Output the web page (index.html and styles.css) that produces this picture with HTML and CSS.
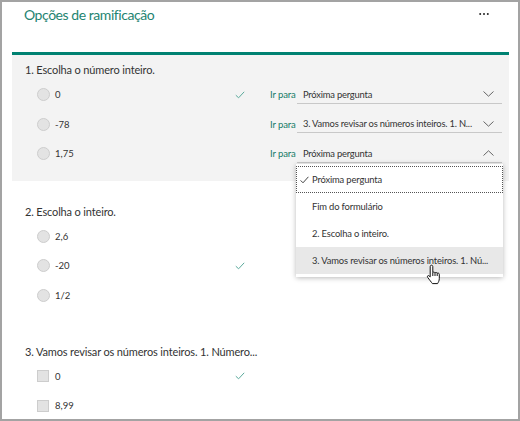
FILE: index.html
```html
<!DOCTYPE html>
<html lang="pt">
<head>
<meta charset="utf-8">
<link rel="stylesheet" href="styles.css">
</head>
<body>
<div class="frame">
  <header class="head">
    <h1 class="title">Opções de ramificação</h1>
    <svg class="more" width="10" height="4" viewBox="0 0 10 4"><circle cx="1.2" cy="2" r="1" fill="#222"/><circle cx="5" cy="2" r="1" fill="#222"/><circle cx="8.8" cy="2" r="1" fill="#222"/></svg>
  </header>
  <div class="card">
    <section class="q q1">
      <div class="qtitle">1. Escolha o número inteiro.</div>
      <div class="row">
        <span class="radio"></span><span class="lbl">0</span>
        <span class="chk"><svg width="10" height="8" viewBox="0 0 10 8"><path d="M0.8 4.2 L3.6 6.8 L9.2 0.8" fill="none" stroke="#5aa99b" stroke-width="1"/></svg></span>
        <span class="go">Ir para</span>
        <span class="sel"><span class="seltxt">Próxima pergunta</span><svg class="chev" width="11" height="6" viewBox="0 0 11 6"><path d="M0.5 0.5 L5.5 5.2 L10.5 0.5" fill="none" stroke="#666" stroke-width="1"/></svg></span>
      </div>
      <div class="row">
        <span class="radio"></span><span class="lbl">-78</span>
        <span class="chk"></span>
        <span class="go">Ir para</span>
        <span class="sel"><span class="seltxt">3. Vamos revisar os números inteiros. 1. N...</span><svg class="chev" width="11" height="6" viewBox="0 0 11 6"><path d="M0.5 0.5 L5.5 5.2 L10.5 0.5" fill="none" stroke="#666" stroke-width="1"/></svg></span>
      </div>
      <div class="row">
        <span class="radio"></span><span class="lbl">1,75</span>
        <span class="chk"></span>
        <span class="go">Ir para</span>
        <span class="sel open"><span class="seltxt">Próxima pergunta</span><svg class="chev" width="11" height="6" viewBox="0 0 11 6"><path d="M0.5 5.5 L5.5 0.8 L10.5 5.5" fill="none" stroke="#666" stroke-width="1"/></svg></span>
      </div>
    </section>
    <section class="q q2">
      <div class="qtitle">2. Escolha o inteiro.</div>
      <div class="row">
        <span class="radio"></span><span class="lbl">2,6</span>
      </div>
      <div class="row">
        <span class="radio"></span><span class="lbl">-20</span>
        <span class="chk"><svg width="10" height="8" viewBox="0 0 10 8"><path d="M0.8 4.2 L3.6 6.8 L9.2 0.8" fill="none" stroke="#5aa99b" stroke-width="1"/></svg></span>
      </div>
      <div class="row">
        <span class="radio"></span><span class="lbl">1/2</span>
      </div>
    </section>
    <section class="q q3">
      <div class="qtitle">3. Vamos revisar os números inteiros. 1. Número...</div>
      <div class="row">
        <span class="box"></span><span class="lbl">0</span>
        <span class="chk"><svg width="10" height="8" viewBox="0 0 10 8"><path d="M0.8 4.2 L3.6 6.8 L9.2 0.8" fill="none" stroke="#5aa99b" stroke-width="1"/></svg></span>
      </div>
      <div class="row">
        <span class="box"></span><span class="lbl">8,99</span>
      </div>
    </section>
  </div>
  <ul class="menu">
    <li class="item focus"><svg class="tick" width="9" height="8" viewBox="0 0 9 8"><path d="M0.6 4.4 L3 6.8 L8.4 0.8" fill="none" stroke="#444" stroke-width="1"/></svg>Próxima pergunta</li>
    <li class="item">Fim do formulário</li>
    <li class="item">2. Escolha o inteiro.</li>
    <li class="item hover">3. Vamos revisar os números inteiros. 1. Nú...</li>
  </ul>
  <svg class="hand" width="16" height="21" viewBox="0 0 16 21"><path d="M5.5 1.2 C6.3 1.2 6.8 1.8 6.8 2.6 L6.8 8.6 C7.2 7.9 8.6 7.9 9 8.9 C9.5 8.2 10.9 8.3 11.2 9.3 C11.7 8.8 13.2 9 13.3 10.2 L13.3 14.5 C13.3 16.8 12.3 18.3 11.6 19.6 L6.4 19.6 C5.4 18.3 3.3 15.6 1.7 13.4 C1 12.4 1.6 11.2 2.8 11.6 L4.2 12.9 L4.2 2.6 C4.2 1.8 4.7 1.2 5.5 1.2 Z M6.8 8.6 L6.8 12 M9 8.9 L9 12 M11.2 9.3 L11.2 12" fill="#fff" stroke="#111" stroke-width="1" stroke-linejoin="round"/></svg>
</div>
</body>
</html>
```

FILE: styles.css
```css
* { box-sizing: border-box; }
html, body { margin: 0; padding: 0; background: #fff; }
body { font-family: Lato, "Open Sans", sans-serif; color: #333; }
.frame {
  position: relative;
  width: 520px;
  height: 421px;
  border: 2px solid #a3a3a3;
  overflow: hidden;
}
.head {
  height: 50px;
  display: flex;
  justify-content: space-between;
  align-items: flex-start;
  padding: 0 29px 0 22px;
}
.title {
  margin: 0;
  font-weight: 400;
  font-size: 14px;
  letter-spacing: -0.45px;
  line-height: 20px;
  padding-top: 3px;
  color: #1e8471;
}
.more { margin-top: 10px; }
.card {
  margin: 0 9px 0 10px;
  border-top: 3px solid #008272;
}
.q { padding-left: 25px; padding-right: 5px; }
.q1 { background: #f3f3f3; padding-top: 7px; padding-bottom: 12px; }
.q2 { padding-top: 23px; padding-bottom: 10px; }
.q3 { padding-top: 23.5px; }
.qtitle {
  margin-left: -12px;
  font-size: 11px;
  letter-spacing: -0.15px;
  line-height: 16px;
  margin-bottom: 2px;
  color: #333;
  white-space: nowrap;
}
.row {
  height: 29.5px;
  display: grid;
  grid-template-columns: 18px 179px 36px 27px 205px;
  align-items: center;
}
.radio {
  width: 13px; height: 13px;
  border-radius: 50%;
  background: #e3e3e3;
  border: 1px solid #cdcdcd;
}
.box {
  width: 12px; height: 12px;
  background: #e3e3e3;
  border: 1px solid #cdcdcd;
}
.lbl { font-size: 9.5px; color: #333; }
.chk { display: flex; align-items: center; padding-left: 1px; }
.go { font-size: 9.5px; color: #147a67; white-space: nowrap; letter-spacing: -0.1px; }
.sel {
  height: 17px;
  margin-top: 1px;
  border-bottom: 1px solid #c8c8c8;
  display: flex;
  align-items: center;
  justify-content: space-between;
  padding: 0 8px 1px 6px;
  font-size: 9.4px;
  letter-spacing: -0.2px;
  color: #333;
}
.seltxt { white-space: nowrap; }
.chev { flex: none; }
.menu {
  position: absolute;
  left: 294px;
  top: 162px;
  width: 207px;
  margin: 0;
  padding: 2px 0 3px;
  list-style: none;
  background: #fff;
  box-shadow: 0 1px 5px rgba(0,0,0,0.28);
}
.item {
  height: 27px;
  display: flex;
  align-items: center;
  padding-left: 16px;
  font-size: 9.4px;
  letter-spacing: -0.15px;
  color: #333;
  white-space: nowrap;
}
.item.focus { outline: 1px dotted #555; outline-offset: -1px; padding-left: 4px; }
.tick { margin-right: 3px; }
.item.hover { background: #e8e8e8; }
.hand { position: absolute; left: 424px; top: 262px; }
```
